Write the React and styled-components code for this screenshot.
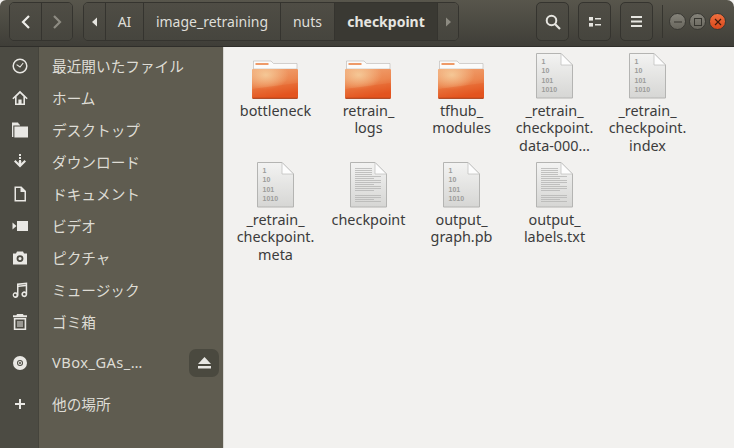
import React from "react";
import styled, { createGlobalStyle } from "styled-components";

const Global = createGlobalStyle`
  html, body { margin: 0; padding: 0; background: #f2f1ef; }
  body { font-family: "Noto Sans", "Noto Sans CJK JP", sans-serif; }
`;

const Window = styled.div`
  width: 734px;
  height: 448px;
  display: flex;
  flex-direction: column;
  overflow: hidden;
  border-radius: 6px 7px 0 0;
  background: #f2f1ef;
`;

const Header = styled.header`
  height: 47px;
  box-sizing: border-box;
  flex: none;
  display: flex;
  align-items: center;
  padding: 0 9px 3px;
  background: linear-gradient(#58564c, #3f3e38);
  border-bottom: 1px solid #2f2e2a;
`;

const Group = styled.div`
  display: flex;
  flex: none;
  height: 39px;
  box-sizing: border-box;
  border: 1px solid #35342f;
  border-radius: 5px;
  overflow: hidden;
  margin-left: ${(p) => p.$ml || 0}px;
`;

const Segment = styled.div`
  width: ${(p) => p.$w}px;
  box-sizing: border-box;
  display: flex;
  align-items: center;
  justify-content: center;
  background: ${(p) => (p.$active ? "#3a3933" : "linear-gradient(#4f4d45, #46453e)")};
  color: ${(p) => (p.$active ? "#e6e5e0" : "#dfded8")};
  font-size: 14px;
  font-weight: ${(p) => (p.$active ? 700 : 400)};
  white-space: nowrap;
  & + & { border-left: 1px solid #35342f; }
`;

const ToolButton = styled(Segment).attrs({ as: "div" })`
  width: 33px;
  height: 39px;
  flex: none;
  border: 1px solid #35342f;
  border-radius: 5px;
  margin-left: ${(p) => p.$ml}px;
`;

const Separator = styled.div`
  width: 1px;
  height: 33px;
  flex: none;
  margin: 0 6px 0 9px;
  background: #36352f;
`;

const WinControls = styled.div`
  display: flex;
  flex: none;
  gap: 3px;
`;

const WinDot = styled.div`
  width: 17px;
  height: 17px;
  box-sizing: border-box;
  border-radius: 50%;
  display: flex;
  align-items: center;
  justify-content: center;
  background: ${(p) => (p.$close ? "linear-gradient(#f0703f, #d9481c)" : "linear-gradient(#85837a, #68665d)")};
  border: 0.5px solid #3a3934;
`;

const Body = styled.div`
  flex: 1;
  display: flex;
  min-height: 0;
`;

const Sidebar = styled.nav`
  width: 224px;
  flex: none;
  box-sizing: border-box;
  padding-top: 2px;
  border-right: 1px solid #d8d7d3;
  background: linear-gradient(to right, #4c4b43 38px, #45443c 38px, #45443c 39px, #5f5c50 39px);
`;

const Row = styled.div`
  height: 32px;
  display: flex;
  align-items: center;
  position: relative;
  margin-top: ${(p) => p.$mt || 0}px;
`;

const RowIcon = styled.div`
  width: 40px;
  flex: none;
  display: flex;
  justify-content: center;
  padding-top: 2px;
  svg { display: block; }
`;

const RowLabel = styled.span`
  margin-left: 12px;
  font-size: 14.67px;
  color: #dedcd5;
  letter-spacing: ${(p) => p.$ls || 0}px;
  white-space: nowrap;
`;

const Eject = styled.div`
  position: absolute;
  left: 189px;
  top: 3px;
  width: 30px;
  height: 28px;
  border-radius: 7px;
  background: #4a493f;
  display: flex;
  align-items: center;
  justify-content: center;
`;

const Grid = styled.main`
  flex: 1;
  display: grid;
  grid-template-columns: repeat(5, 93px);
  grid-auto-rows: 109px;
  align-content: start;
  padding: 5px 0 0 5px;
  background: #f2f1ef;
`;

const Item = styled.div`
  display: flex;
  flex-direction: column;
  align-items: center;
`;

const IconBox = styled.div`
  width: 48px;
  height: 48px;
  svg { display: block; }
`;

const Name = styled.div`
  margin-top: 2px;
  text-align: center;
  color: #3c3c3c;
  font-size: 14.4px;
  line-height: 17.3px;
  white-space: nowrap;
`;

const Glyph = ({ size = 16, children }) => (
  <svg width={size} height={size} viewBox="0 0 16 16" fill="#e9e8e4">{children}</svg>
);

const icons = {
  clock: (
    <Glyph>
      <circle cx="8" cy="8" r="6.8" fill="none" stroke="#e9e8e4" strokeWidth="1.5" />
      <path d="M4.6 6.6 8 9l3.2-4" fill="none" stroke="#e9e8e4" strokeWidth="1.1" />
    </Glyph>
  ),
  home: (
    <Glyph>
      <path fillRule="evenodd" d="M8 .8 .3 8.3l1.1 1L3 7.8V15h10V7.8l1.6 1.5 1.1-1zM8 3.3l3.4 3.2v7H9.6V9.6H6.4v3.9H4.6v-7z" />
    </Glyph>
  ),
  folder: (
    <Glyph>
      <path d="M0 .5h6l1.2 2H8v1H1.3V15H0z" />
      <path d="M2.4 4.6H16V15.5H2.4z" />
    </Glyph>
  ),
  download: (
    <Glyph>
      <path d="M7 0h2v2H7zM7 3h2v2H7zM7 6h2v3.5L12.5 6 14 7.4 8 13.4 2 7.4 3.5 6 7 9.5z" />
      <path d="M6.7 7H9.3v3H6.7z" />
    </Glyph>
  ),
  doc: (
    <Glyph>
      <path fillRule="evenodd" d="M2.5 .5h7L14 5v10.5H2.5zM4 2v12h8.5V6H8.5V2z" />
    </Glyph>
  ),
  video: (
    <Glyph>
      <path d="M5 3h11v10H5z" />
      <path d="M.5 4.5 4.5 8 .5 11.5z" />
    </Glyph>
  ),
  camera: (
    <Glyph>
      <path fillRule="evenodd" d="M5 1.5h6l1 2h3V14.5H1V3.5h3zM8 5.2a3.4 3.4 0 1 0 0 6.8 3.4 3.4 0 0 0 0-6.8zM8 7a1.6 1.6 0 1 1 0 3.2A1.6 1.6 0 0 1 8 7z" />
    </Glyph>
  ),
  music: (
    <Glyph>
      <path fillRule="evenodd" d="M5 1.5 15.2.4V12.2a2.9 2.9 0 1 1-1.5-2.5V4.2L6.5 5V13a2.9 2.9 0 1 1-1.5-2.5zM3.2 11.7a1.3 1.3 0 1 0 0 2.6 1.3 1.3 0 0 0 0-2.6zM12.3 11a1.3 1.3 0 1 0 0 2.6 1.3 1.3 0 0 0 0-2.6zM6.5 2.9v.7l7.2-.8v-.6z" />
    </Glyph>
  ),
  trash: (
    <Glyph>
      <path fillRule="evenodd" d="M5 0h6l.6 1.2H15v2H1v-2h3.4zM1.8 4h12.4v12H1.8zM3.4 5.5V14.5h9.2V5.5zM5.5 7h1v6h-1zM7.5 7h1v6h-1zM9.5 7h1v6h-1z" />
    </Glyph>
  ),
  disc: (
    <Glyph>
      <path fillRule="evenodd" d="M8 1a7 7 0 1 1 0 14A7 7 0 0 1 8 1zM8 5a3 3 0 1 0 0 6 3 3 0 0 0 0-6zM8 6a2 2 0 1 1 0 4 2 2 0 0 1 0-4zM8 7a1 1 0 1 0 0 2 1 1 0 0 0 0-2z" />
    </Glyph>
  ),
  plus: (
    <Glyph>
      <path d="M7 3h2v4h4v2H9v4H7V9H3V7h4z" />
    </Glyph>
  ),
};

const places = [
  ["clock", "最近開いたファイル"],
  ["home", "ホーム"],
  ["folder", "デスクトップ"],
  ["download", "ダウンロード"],
  ["doc", "ドキュメント"],
  ["video", "ビデオ"],
  ["camera", "ピクチャ"],
  ["music", "ミュージック"],
  ["trash", "ゴミ箱"],
];

const FolderIcon = ({ id }) => (
  <svg width="48" height="48" viewBox="0 0 48 48">
    <defs>
      <linearGradient id={`fb${id}`} x1="0" y1="0" x2="0.3" y2="1">
        <stop offset="0" stopColor="#f1a473" />
        <stop offset="0.55" stopColor="#ec8750" />
        <stop offset="1" stopColor="#e35420" />
      </linearGradient>
      <radialGradient id={`fg${id}`} cx="0.3" cy="0.2" r="0.5">
        <stop offset="0" stopColor="#f6d09f" stopOpacity="0.85" />
        <stop offset="1" stopColor="#f6d09f" stopOpacity="0" />
      </radialGradient>
    </defs>
    <path d="M1.5 17V9H19l2.5 2.5H45V17z" fill="#fbfbfa" stroke="#b9b6b1" strokeWidth="0.6" />
    <rect x="3.5" y="11" width="13" height="2" fill="#ee9a68" />
    <rect x="0" y="17" width="46" height="29.5" rx="1" fill={`url(#fb${id})`} />
    <rect x="0" y="17" width="46" height="29.5" rx="1" fill={`url(#fg${id})`} />
    <path d="M.5 37 45.5 31V46H.5z" fill="#e4561d" opacity="0.3" />
    <path d="M.5 46.3h45" stroke="#a33a13" strokeWidth="1" />
  </svg>
);

const Page = ({ id, children }) => (
  <svg width="48" height="48" viewBox="0 0 48 48">
    <defs>
      <linearGradient id={`pg${id}`} x1="0" y1="0" x2="0" y2="1">
        <stop offset="0" stopColor="#f3f3f2" />
        <stop offset="1" stopColor="#d6d6d4" />
      </linearGradient>
    </defs>
    <path d="M5.5 1.5H30L41.5 13V46H5.5z" fill={`url(#pg${id})`} stroke="#b4b4b2" strokeWidth="1" />
    <path d="M30 1.5V13H41.5z" fill="#fdfdfd" stroke="#c2c2c0" strokeWidth="0.8" />
    {children}
  </svg>
);

const BinaryText = styled.text`
  font-family: "Liberation Sans", sans-serif;
  font-size: 7px;
  font-weight: 700;
  fill: #9c9c9a;
`;

const BinaryIcon = ({ id }) => (
  <Page id={id}>
    {["1", "10", "101", "1010"].map((t, i) => (
      <BinaryText key={t} x="10.5" y={12 + i * 9.3}>{t}</BinaryText>
    ))}
  </Page>
);

const lineRows = [7, 9, 11, 13, 15, 17, 19, 21, 23, 25, 27, 29, 34, 36, 38, 40];
const TextIcon = ({ id }) => (
  <Page id={id}>
    {lineRows.map((y, i) => (
      <rect key={y} x="10" y={y} width={y < 14 ? 17 : i % 3 === 2 ? 19 : 26} height="0.8" fill="#b6b6b4" />
    ))}
  </Page>
);

const files = [
  ["folder", ["bottleneck"]],
  ["folder", ["retrain_", "logs"]],
  ["folder", ["tfhub_", "modules"]],
  ["bin", ["_retrain_", "checkpoint.", "data-000…"]],
  ["bin", ["_retrain_", "checkpoint.", "index"]],
  ["bin", ["_retrain_", "checkpoint.", "meta"]],
  ["text", ["checkpoint"]],
  ["bin", ["output_", "graph.pb"]],
  ["text", ["output_", "labels.txt"]],
];

const Chevron = ({ d, color }) => (
  <svg width="12" height="16" viewBox="0 0 12 16"><path d={d} fill="none" stroke={color} strokeWidth="2.2" /></svg>
);

const Triangle = ({ d, color }) => (
  <svg width="8" height="12" viewBox="0 0 8 12"><path d={d} fill={color} /></svg>
);

export default function App() {
  return (
    <Window>
      <Global />
      <Header>
        <Group>
          <Segment $w={31}><Chevron d="M9 2 3 8l6 6" color="#eeede9" /></Segment>
          <Segment $w={31}><Chevron d="M3 2l6 6-6 6" color="#8d8b82" /></Segment>
        </Group>
        <Group $ml={10}>
          <Segment $w={21}><Triangle d="M6 1.5v9L1 6z" color="#e6e5e0" /></Segment>
          <Segment $w={38}>AI</Segment>
          <Segment $w={137}>image_retraining</Segment>
          <Segment $w={54}>nuts</Segment>
          <Segment $w={103} $active>checkpoint</Segment>
          <Segment $w={21}><Triangle d="M2 1.5v9L7 6z" color="#8d8b82" /></Segment>
        </Group>
        <ToolButton $ml={77}>
          <svg width="16" height="16" viewBox="0 0 16 16" fill="none" stroke="#e6e5e0">
            <circle cx="6.5" cy="6.5" r="4.8" strokeWidth="2" />
            <path d="M10 10l5 5" strokeWidth="2.2" />
          </svg>
        </ToolButton>
        <ToolButton $ml={9}>
          <svg width="12" height="10" viewBox="0 0 12 10" fill="#e6e5e0">
            <rect x="0" y="0" width="4" height="3.6" />
            <rect x="0" y="6" width="4" height="3.6" />
            <rect x="6" y="1" width="6" height="1.5" />
            <rect x="6" y="7" width="6" height="1.5" />
          </svg>
        </ToolButton>
        <ToolButton $ml={9}>
          <svg width="11" height="11" viewBox="0 0 11 11" fill="#e6e5e0">
            <rect y="0" width="11" height="2" />
            <rect y="4.5" width="11" height="2" />
            <rect y="9" width="11" height="2" />
          </svg>
        </ToolButton>
        <Separator />
        <WinControls>
          <WinDot>
            <svg width="8" height="8" viewBox="0 0 8 8"><path d="M0 4h8" stroke="#36352f" strokeWidth="1.2" /></svg>
          </WinDot>
          <WinDot>
            <svg width="8" height="8" viewBox="0 0 8 8"><rect x="0.5" y="0.5" width="7" height="7" fill="none" stroke="#36352f" /></svg>
          </WinDot>
          <WinDot $close>
            <svg width="8" height="8" viewBox="0 0 8 8"><path d="M1 1l6 6M7 1 1 7" stroke="#3d1a0c" strokeWidth="1.2" /></svg>
          </WinDot>
        </WinControls>
      </Header>
      <Body>
        <Sidebar>
          {places.map(([icon, label]) => (
            <Row key={label}>
              <RowIcon>{icons[icon]}</RowIcon>
              <RowLabel>{label}</RowLabel>
            </Row>
          ))}
          <Row $mt={9}>
            <RowIcon>{icons.disc}</RowIcon>
            <RowLabel $ls={0.45}>VBox_GAs_…</RowLabel>
            <Eject>
              <svg width="13" height="12" viewBox="0 0 13 12" fill="#e9e8e4">
                <path d="M6.5 0 13 7H0z" />
                <rect y="9" width="13" height="2.5" />
              </svg>
            </Eject>
          </Row>
          <Row $mt={9}>
            <RowIcon>{icons.plus}</RowIcon>
            <RowLabel>他の場所</RowLabel>
          </Row>
        </Sidebar>
        <Grid>
          {files.map(([kind, lines], i) => (
            <Item key={i}>
              <IconBox>
                {kind === "folder" && <FolderIcon id={i} />}
                {kind === "bin" && <BinaryIcon id={i} />}
                {kind === "text" && <TextIcon id={i} />}
              </IconBox>
              <Name>
                {lines.map((l) => <div key={l}>{l}</div>)}
              </Name>
            </Item>
          ))}
        </Grid>
      </Body>
    </Window>
  );
}
